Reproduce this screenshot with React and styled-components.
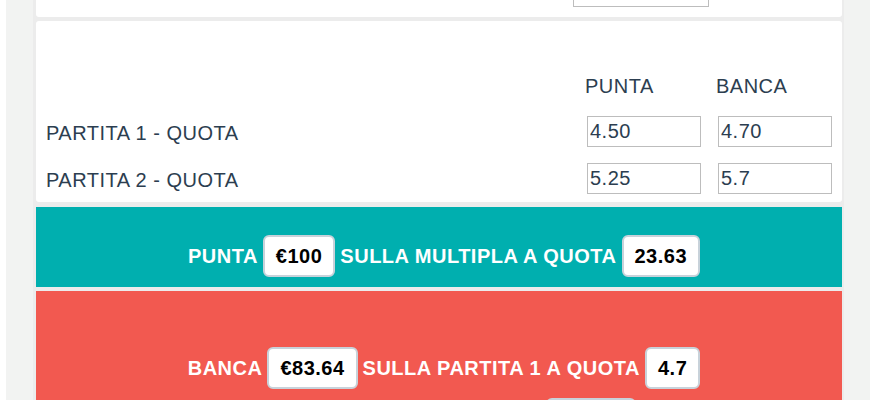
import React from "react";
import styled, { createGlobalStyle } from "styled-components";

const GlobalStyle = createGlobalStyle`
  html, body {
    margin: 0;
    padding: 0;
    background: #ffffff;
    font-family: "Liberation Sans", Arial, Helvetica, sans-serif;
    color: #2c3e50;
    letter-spacing: 0.5px;
  }
`;

const Page = styled.div`
  padding: 0 6px;
  height: 400px;
  overflow: hidden;
`;

const Wrapper = styled.div`
  background: #f2f3f2;
  padding: 0 26px 0 27px;
  height: 100%;
`;

const Column = styled.div`
  background: #ececec;
  padding: 0 2px 0 3px;
  display: flex;
  flex-direction: column;
  gap: 4px;
  height: 100%;
  & > * {
    flex-shrink: 0;
  }
`;

const Card = styled.div`
  background: #ffffff;
  border-radius: 0 0 3px 3px;
  padding: 0 10px;
`;

const TopCard = styled(Card)`
  height: 17px;
  display: flex;
  align-items: flex-end;
  justify-content: flex-end;
  overflow: hidden;
  padding-right: 133px;
`;

const OddsCard = styled(Card)`
  border-radius: 3px;
  padding: 53px 10px 8px;
  margin-bottom: 1px;
  display: grid;
  grid-template-columns: 1fr 114px 114px;
  column-gap: 17px;
  row-gap: 16px;
  align-items: center;
`;

const ColHead = styled.div`
  font-size: 20px;
  line-height: 24px;
  margin-left: -2px;
  margin-bottom: 2px;
`;

const Label = styled.div`
  font-size: 20px;
  line-height: 24px;
  padding-top: 2px;
`;

const Input = styled.input`
  box-sizing: border-box;
  width: ${(p) => p.$w || 114}px;
  height: 31px;
  border: 1px solid #bdbdbd;
  border-radius: 0;
  padding: 0 2px;
  font-family: "Liberation Sans", Arial, sans-serif;
  font-size: 20px;
  letter-spacing: 0.5px;
  color: #2c3e50;
  background: #fff;
  outline: none;
`;

const TopInput = styled(Input)`
  margin-bottom: 10px;
`;

const Band = styled.div`
  background: ${(p) => p.$bg};
  padding: ${(p) => p.$pad};
  display: flex;
  flex-direction: column;
  gap: 9px;
`;

const Line = styled.div`
  display: flex;
  justify-content: center;
  align-items: center;
  gap: 5px;
  color: #ffffff;
  font-weight: 700;
  font-size: 20px;
  line-height: 24px;
`;

const Value = styled.span`
  display: inline-block;
  box-sizing: border-box;
  height: 42px;
  line-height: 38px;
  padding: 0 11px;
  background: #ffffff;
  border: 2px solid #c8d2da;
  border-radius: 6px;
  color: #000000;
  font-weight: 700;
  font-size: 20px;
`;

const rows = [
  { label: "PARTITA 1 - QUOTA", back: "4.50", lay: "4.70" },
  { label: "PARTITA 2 - QUOTA", back: "5.25", lay: "5.7" },
];

export default function App() {
  return (
    <>
      <GlobalStyle />
      <Page>
        <Wrapper>
          <Column>
            <TopCard>
              <TopInput $w={136} defaultValue="100" />
            </TopCard>
            <OddsCard>
              <div />
              <ColHead>PUNTA</ColHead>
              <ColHead>BANCA</ColHead>
              {rows.map((r) => (
                <React.Fragment key={r.label}>
                  <Label>{r.label}</Label>
                  <Input defaultValue={r.back} />
                  <Input defaultValue={r.lay} />
                </React.Fragment>
              ))}
            </OddsCard>
            <Band $bg="#00afaf" $pad="28px 0 10px 10px">
              <Line>
                PUNTA <Value>€100</Value> SULLA MULTIPLA A QUOTA{" "}
                <Value>23.63</Value>
              </Line>
            </Band>
            <Band $bg="#f25950" $pad="56px 0 40px 10px">
              <Line>
                BANCA <Value>€83.64</Value> SULLA PARTITA 1 A QUOTA{" "}
                <Value>4.7</Value>
              </Line>
              <Line>
                SE VINCE PARTITA 1 BANCA <Value>€98.35</Value>
              </Line>
            </Band>
          </Column>
        </Wrapper>
      </Page>
    </>
  );
}
